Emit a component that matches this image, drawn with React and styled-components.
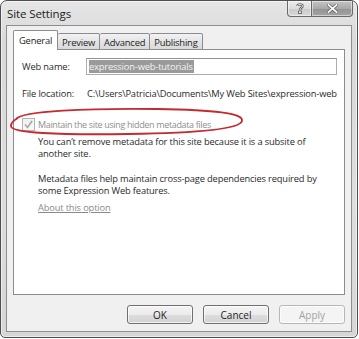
import React from 'react';
import styled, { createGlobalStyle } from 'styled-components';

const GlobalStyle = createGlobalStyle`
    body {
        margin: 0;
        background: #ffffff;
        font-family: "Open Sans", "Noto Sans", sans-serif;
    }
`;

const StyledWindow = styled.div`
    width: 358px;
    height: 338px;
    box-sizing: border-box;
    border: 1px solid #4f4f4f;
    border-radius: 7px 7px 5px 5px;
    background: linear-gradient(180deg, #e6e6e6 0%, #d9d9d9 12%, #dedede 60%, #d6d6d6 100%);
    box-shadow: inset 0 0 0 1px rgba(255, 255, 255, 0.55);
    padding: 0 5px 5px 5px;
    display: flex;
    flex-direction: column;
`;

const StyledTitleBar = styled.div`
    height: 24px;
    display: flex;
    align-items: flex-start;
    flex-shrink: 0;
`;

const StyledTitle = styled.div`
    margin-top: 5px;
    padding-left: 1px;
    font-size: 11.5px;
    color: #1c1c1c;
    letter-spacing: -0.1px;
`;

const StyledCaptionButtons = styled.div`
    margin-left: auto;
    margin-right: -1px;
    display: flex;
`;

const StyledCaptionButton = styled.div`
    width: ${props => props.wide ? '41px' : '25px'};
    height: 16px;
    box-sizing: border-box;
    border: 1px solid #6a6a6a;
    border-top: none;
    border-left: ${props => props.wide && 'none'};
    border-radius: ${props => props.wide ? '0 0 4px 0' : '0 0 0 4px'};
    background: ${props => props.wide
        ? 'linear-gradient(180deg, #c4c4c4 0%, #a9a9a9 50%, #939393 51%, #a4a4a4 100%)'
        : 'linear-gradient(180deg, #ececec 0%, #dcdcdc 50%, #cacaca 51%, #d8d8d8 100%)'};
    box-shadow: inset 0 0 0 1px rgba(255, 255, 255, 0.5);
    display: flex;
    align-items: center;
    justify-content: center;
`;

const StyledClient = styled.div`
    flex: 1;
    background: #f0f0f0;
    border: 1px solid #8e8e8e;
    padding: 5px 6px 0 6px;
    display: flex;
    flex-direction: column;
`;

const StyledTabs = styled.div`
    display: flex;
    align-items: flex-end;
    height: 19px;
    position: relative;
    z-index: 1;
    margin-bottom: -1px;
`;

const StyledTab = styled.div`
    height: ${props => props.active ? '20px' : '17px'};
    box-sizing: border-box;
    padding: 0 ${props => props.active ? '5px' : '4px'};
    border: 1px solid #898c95;
    border-bottom: ${props => props.active ? 'none' : '1px solid #898c95'};
    border-left: ${props => props.first || props.active ? '1px solid #898c95' : 'none'};
    border-radius: 2px 2px 0 0;
    background: ${props => props.active ? '#ffffff' : 'linear-gradient(180deg, #f2f2f2 0%, #e4e4e4 50%, #d9d9d9 100%)'};
    font-size: 9.4px;
    letter-spacing: -0.2px;
    color: #1e1e1e;
    display: flex;
    align-items: center;
    padding-top: ${props => props.active ? '0' : '1px'};
`;

const StyledPanel = styled.div`
    height: 246px;
    box-sizing: border-box;
    background: #ffffff;
    border: 1px solid #898c95;
    padding: 7px 7px 0 7px;
    position: relative;
    font-size: 9.3px;
    letter-spacing: -0.15px;
    color: #2a2a2a;
`;

const StyledFieldRow = styled.div`
    display: flex;
    align-items: center;
    height: 17px;
    margin-top: ${props => props.gap}px;
    overflow: hidden;
`;

const StyledLabel = styled.div`
    width: 64px;
    flex-shrink: 0;
    padding-left: 1px;
`;

const StyledInput = styled.div`
    width: 252px;
    height: 17px;
    box-sizing: border-box;
    border: 1px solid #abadb3;
    border-top-color: #8f9194;
    padding: 1px 2px;
    display: flex;
    align-items: center;
`;

const StyledSelection = styled.span`
    background: #9a9a9a;
    color: #f4f4f4;
    line-height: 13px;
    padding-right: 1px;
`;

const StyledValue = styled.div`
    white-space: nowrap;
    overflow: hidden;
    padding-left: 1px;
`;

const StyledCheckRow = styled.div`
    display: flex;
    align-items: center;
    gap: 3px;
    margin-top: 15px;
    height: 15px;
    padding-left: 1px;
    color: #8f8f8f;
    font-size: 9px;
    letter-spacing: -0.35px;
`;

const StyledCheckbox = styled.span`
    width: 13px;
    height: 13px;
    box-sizing: border-box;
    border: 1px solid #b4b4b4;
    background: linear-gradient(180deg, #f0f0f0, #fafafa);
    display: flex;
    align-items: center;
    justify-content: center;
`;

const StyledText = styled.p`
    margin: ${props => props.gap}px 0 0 17px;
    line-height: 12px;
    width: 300px;
`;

const StyledLink = styled.span`
    display: block;
    margin: 5px 0 0 17px;
    color: #8a8a8a;
    text-decoration: underline;
    line-height: 12px;
`;

const StyledMark = styled.svg`
    position: absolute;
    left: -6px;
    top: 57px;
    pointer-events: none;
`;

const StyledButtonRow = styled.div`
    display: flex;
    justify-content: flex-end;
    gap: 10px;
    padding-top: 10px;
    padding-right: 0;
`;

const StyledButton = styled.div`
    width: 66px;
    height: 19px;
    box-sizing: border-box;
    border: 1px solid ${props => props.disabled ? '#b5b8bb' : '#707070'};
    border-radius: 3px;
    background: ${props => props.disabled
        ? '#f4f4f4'
        : 'linear-gradient(180deg, #f4f4f4 0%, #ececec 50%, #dddddd 51%, #d2d2d2 100%)'};
    box-shadow: inset 0 0 0 1px rgba(255, 255, 255, 0.7);
    color: ${props => props.disabled ? '#a3a3a3' : '#1e1e1e'};
    font-size: 10px;
    display: flex;
    align-items: center;
    justify-content: center;
`;

const App = () => {
    return (
        <React.Fragment>
            <GlobalStyle />
            <StyledWindow>
                <StyledTitleBar>
                    <StyledTitle>Site Settings</StyledTitle>
                    <StyledCaptionButtons>
                        <StyledCaptionButton>
                            <svg width="8" height="11" viewBox="0 0 8 11">
                                <path d="M1.5 3 C1.5 0.8 6.5 0.8 6.5 3 C6.5 4.8 4 4.8 4 7" fill="none" stroke="#5a5a5a" strokeWidth="2.4" />
                                <path d="M1.5 3 C1.5 0.8 6.5 0.8 6.5 3 C6.5 4.8 4 4.8 4 7" fill="none" stroke="#eeeeee" strokeWidth="1" />
                                <rect x="2.6" y="8" width="2.8" height="2.6" fill="#eeeeee" stroke="#5a5a5a" strokeWidth="0.8" />
                            </svg>
                        </StyledCaptionButton>
                        <StyledCaptionButton wide>
                            <svg width="11" height="9" viewBox="0 0 11 9">
                                <path d="M1.5 1 L9.5 8 M9.5 1 L1.5 8" stroke="#5a5a5a" strokeWidth="3.2" strokeLinecap="square" />
                                <path d="M1.5 1 L9.5 8 M9.5 1 L1.5 8" stroke="#f8f8f8" strokeWidth="1.8" strokeLinecap="square" />
                            </svg>
                        </StyledCaptionButton>
                    </StyledCaptionButtons>
                </StyledTitleBar>
                <StyledClient>
                    <StyledTabs>
                        <StyledTab active first>General</StyledTab>
                        <StyledTab>Preview</StyledTab>
                        <StyledTab>Advanced</StyledTab>
                        <StyledTab>Publishing</StyledTab>
                    </StyledTabs>
                    <StyledPanel>
                        <StyledFieldRow gap={1}>
                            <StyledLabel>Web name:</StyledLabel>
                            <StyledInput>
                                <StyledSelection>expression-web-tutorials</StyledSelection>
                            </StyledInput>
                        </StyledFieldRow>
                        <StyledFieldRow gap={10}>
                            <StyledLabel>File location:</StyledLabel>
                            <StyledValue>C:\Users\Patricia\Documents\My Web Sites\expression-web-tutorials</StyledValue>
                        </StyledFieldRow>
                        <StyledCheckRow>
                            <StyledCheckbox>
                                <svg width="9" height="9" viewBox="0 0 9 9">
                                    <path d="M1 4.5 L3.5 7.5 L8 1" fill="none" stroke="#a8a8a8" strokeWidth="1.6" />
                                </svg>
                            </StyledCheckbox>
                            Maintain the site using hidden metadata files
                        </StyledCheckRow>
                        <StyledText gap={4}>
                            You can’t remove metadata for this site because it is a subsite of another site.
                        </StyledText>
                        <StyledText gap={13}>
                            Metadata files help maintain cross-page dependencies required by some Expression Web features.
                        </StyledText>
                        <StyledLink>About this option</StyledLink>
                        <StyledMark width="240" height="30" viewBox="0 0 240 30">
                            <path
                                d="M8 12 C 14 4, 80 1, 150 2 C 205 3, 236 6, 234 14 C 232 22, 190 26, 120 27 C 50 28, 2 26, 3 19 C 3 15, 6 13, 10 11"
                                fill="none"
                                stroke="#c42a2e"
                                strokeWidth="1.8"
                            />
                        </StyledMark>
                    </StyledPanel>
                    <StyledButtonRow>
                        <StyledButton>OK</StyledButton>
                        <StyledButton>Cancel</StyledButton>
                        <StyledButton disabled>Apply</StyledButton>
                    </StyledButtonRow>
                </StyledClient>
            </StyledWindow>
        </React.Fragment>
    );
};

export default App;
